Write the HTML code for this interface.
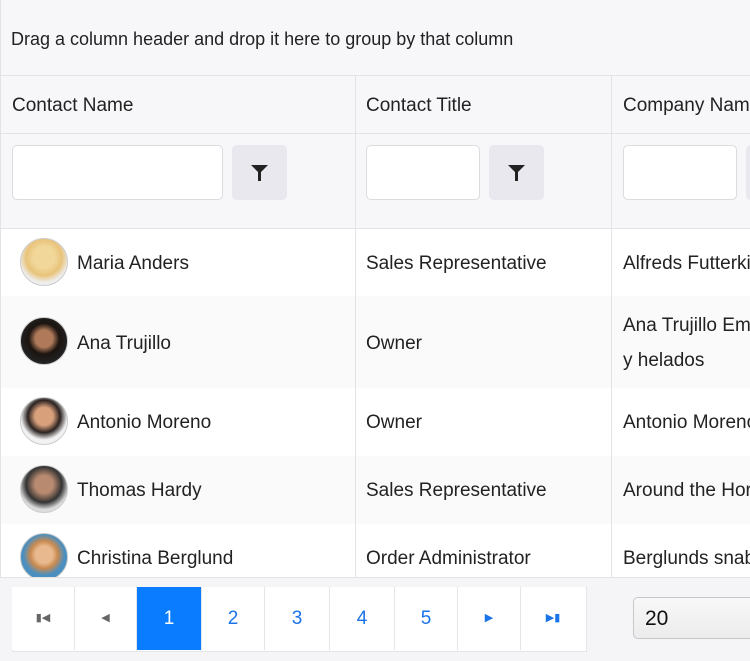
<html><head><style>
body{margin:0;width:750px;height:661px;overflow:hidden;background:#fff;font-family:"Liberation Sans",sans-serif;color:#222}
#w{position:relative;width:750px;height:661px;overflow:hidden}
.a{position:absolute}
.t{font-size:19px;white-space:nowrap}
.vl{position:absolute;width:1px;background:#e3e3e6;top:75px;height:502px}
.hl{position:absolute;left:0;width:750px;height:1px;background:#e3e3e6}
.inp{position:absolute;background:#fff;border:1px solid #dcdce0;border-radius:5px;height:53px;top:145px}
.fb{position:absolute;background:#e8e8ee;border-radius:5px;width:55px;height:55px;top:145px}
.av{position:absolute;left:20px;width:46px;height:46px;border-radius:50%;border:1px solid #ccc;overflow:hidden}
.pb{position:absolute;top:587px;height:63px;border-right:1px solid #e5e5e8;color:#1a73e8;font-size:19px;text-align:center;line-height:63px;background:#fff}
</style></head><body><div id="w">
<div class="a" style="left:0;top:0;width:750px;height:75px;background:#f7f7f9"></div>
<div class="a t" style="left:11px;top:29px;font-size:18px">Drag a column header and drop it here to group by that column</div>
<div class="a" style="left:0;top:75px;width:750px;height:153px;background:#f7f7f9"></div>
<div class="hl" style="top:75px"></div><div class="hl" style="top:133px"></div><div class="hl" style="top:228px"></div>
<div class="a" style="left:0;top:296px;width:750px;height:92px;background:#fafafb"></div>
<div class="a" style="left:0;top:456px;width:750px;height:68px;background:#fafafb"></div>
<div class="vl" style="left:355px"></div><div class="vl" style="left:611px"></div>
<div class="a" style="left:0;top:0;width:1px;height:661px;background:#e3e3e6"></div>
<div class="a t" style="left:12px;top:95px">Contact Name</div>
<div class="a t" style="left:366px;top:95px">Contact Title</div>
<div class="a t" style="left:623px;top:95px">Company Name</div>
<div class="inp" style="left:12px;width:209px"></div>
<div class="fb" style="left:232px"><svg class="a" style="left:19px;top:20px" width="17" height="16" viewBox="0 0 17 16"><path d="M0 0H17L10 7V16H7V7Z" fill="#222"/></svg></div>
<div class="inp" style="left:366px;width:112px"></div>
<div class="fb" style="left:489px"><svg class="a" style="left:19px;top:20px" width="17" height="16" viewBox="0 0 17 16"><path d="M0 0H17L10 7V16H7V7Z" fill="#222"/></svg></div>
<div class="inp" style="left:623px;width:112px"></div>
<div class="fb" style="left:746px"></div>

<div class="av" style="top:238px;background:radial-gradient(circle at 50% 40%,#f1d79a 30%,#e8c37a 50%,#eee 70%)"></div>
<div class="av" style="top:317px;background:radial-gradient(circle at 50% 45%,#b07a5a 25%,#1b1410 45%,#222 70%)"></div>
<div class="av" style="top:397px;background:radial-gradient(circle at 50% 40%,#d9a07c 25%,#2a2220 45%,#f2f2f2 65%)"></div>
<div class="av" style="top:465px;background:radial-gradient(circle at 50% 40%,#b88a70 25%,#333 50%,#ddd 70%)"></div>
<div class="av" style="top:533px;background:radial-gradient(circle at 50% 45%,#e8b98e 25%,#c88a50 40%,#4a8fc0 60%)"></div>

<div class="a t" style="left:77px;top:253px">Maria Anders</div>
<div class="a t" style="left:366px;top:253px">Sales Representative</div>
<div class="a t" style="left:623px;top:253px">Alfreds Futterkiste</div>
<div class="a t" style="left:77px;top:333px">Ana Trujillo</div>
<div class="a t" style="left:366px;top:333px">Owner</div>
<div class="a t" style="left:623px;top:315px">Ana Trujillo Emparedados</div>
<div class="a t" style="left:623px;top:350px">y helados</div>
<div class="a t" style="left:77px;top:412px">Antonio Moreno</div>
<div class="a t" style="left:366px;top:412px">Owner</div>
<div class="a t" style="left:623px;top:412px">Antonio Moreno Taquería</div>
<div class="a t" style="left:77px;top:480px">Thomas Hardy</div>
<div class="a t" style="left:366px;top:480px">Sales Representative</div>
<div class="a t" style="left:623px;top:480px">Around the Horn</div>
<div class="a t" style="left:77px;top:548px">Christina Berglund</div>
<div class="a t" style="left:366px;top:548px">Order Administrator</div>
<div class="a t" style="left:623px;top:548px">Berglunds snabbköp</div>

<div class="a" style="left:0;top:577px;width:750px;height:84px;background:#f5f5f7;border-top:1px solid #e3e3e6"></div>
<div class="a" style="left:12px;top:587px;width:573px;height:63px;border:1px solid #e5e5e8;background:#fff"></div>
<div class="pb" style="left:12px;width:62px;color:#666;font-size:11px">&#9646;&#9664;</div>
<div class="pb" style="left:75px;width:61px;color:#666;font-size:11px">&#9664;</div>
<div class="pb" style="left:137px;width:64px;background:#0a7cff;color:#fff">1</div>
<div class="pb" style="left:202px;width:62px">2</div>
<div class="pb" style="left:265px;width:64px">3</div>
<div class="pb" style="left:330px;width:64px">4</div>
<div class="pb" style="left:395px;width:62px">5</div>
<div class="pb" style="left:458px;width:62px;font-size:11px">&#9654;</div>
<div class="pb" style="left:521px;width:64px;font-size:11px;border:none">&#9654;&#9646;</div>
<div class="a" style="left:633px;top:597px;width:130px;height:40px;border:1px solid #c8c8cc;border-radius:5px;background:linear-gradient(#f8f8f8,#ececec)"></div>
<div class="a t" style="left:645px;top:607px;font-size:21px;color:#111">20</div>
</div></body></html>
